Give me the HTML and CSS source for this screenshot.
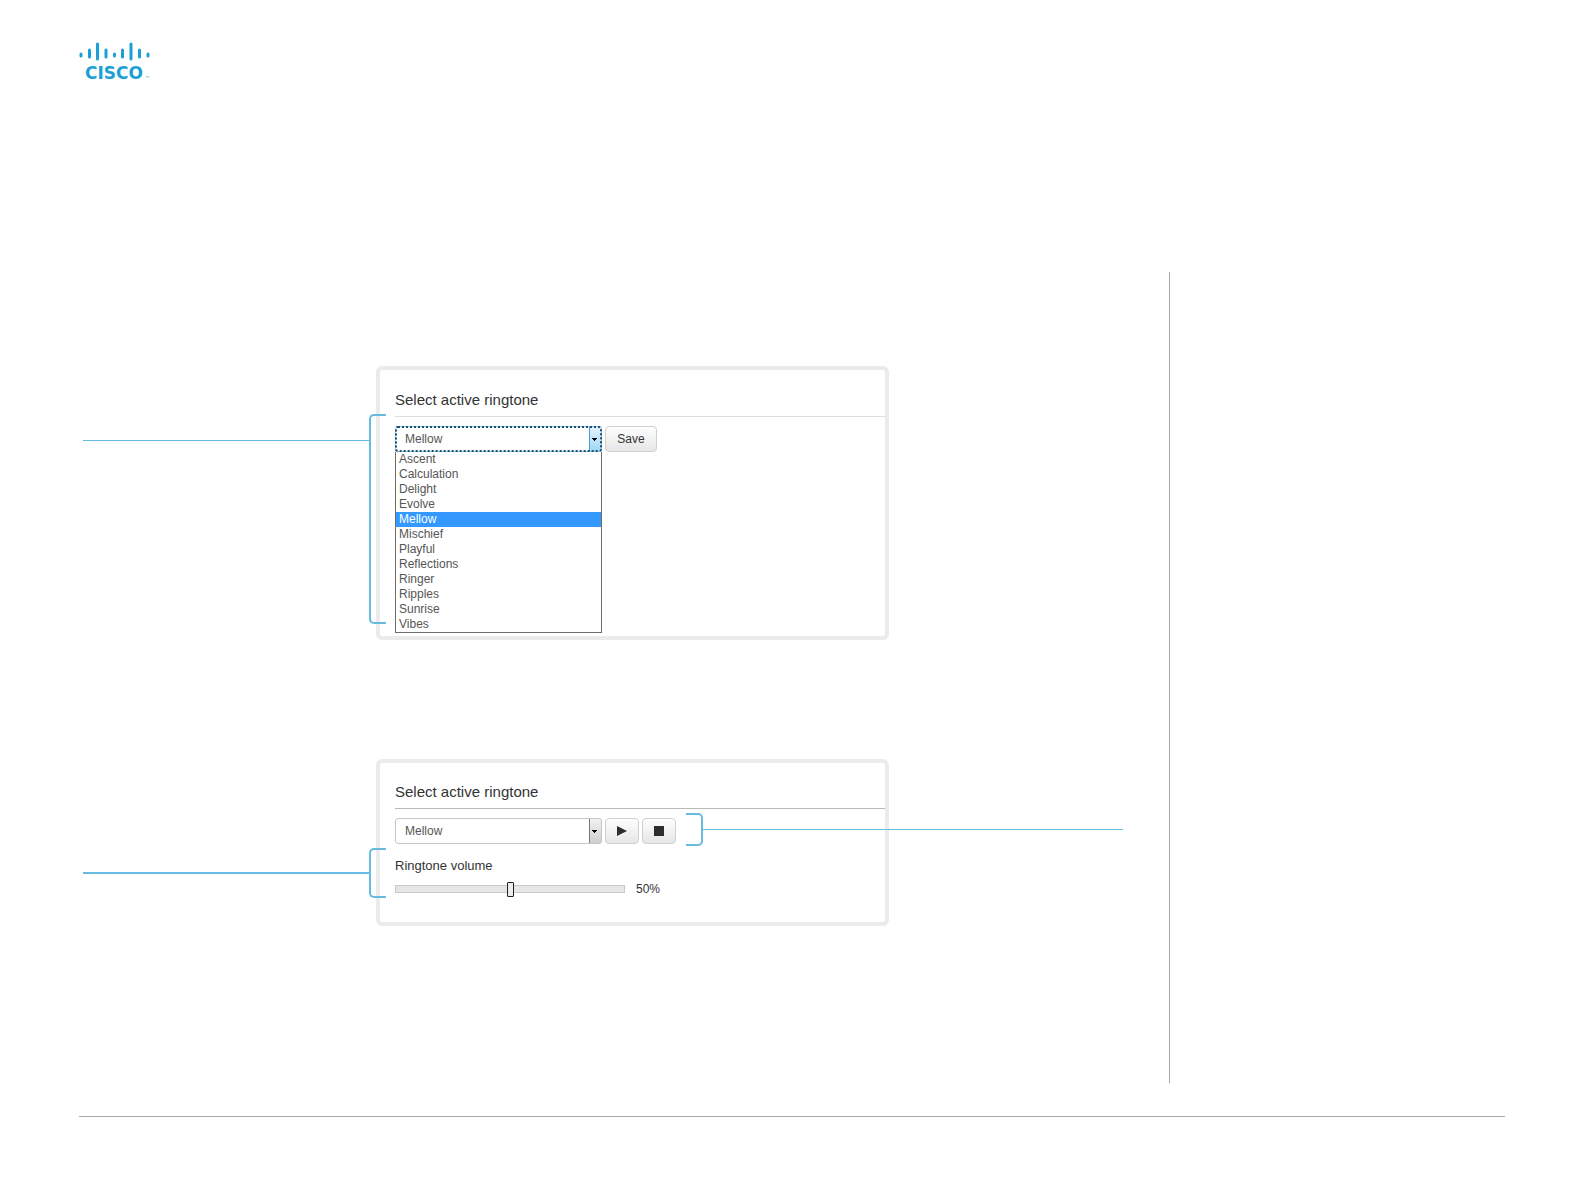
FILE: index.html
```html
<!DOCTYPE html>
<html lang="en">
<head>
<meta charset="utf-8">
<title>Select active ringtone</title>
<link rel="stylesheet" href="styles.css">
</head>
<body>
<div class="page">
  <header class="header">
    <svg class="logo" width="72" height="40" viewBox="0 0 72 40" role="img" aria-label="Cisco">
      <g stroke="#1b9fd4" stroke-width="3" stroke-linecap="round">
        <path d="M2 12v2M10.500 8v7M18.500 2v15M27 8v7M35.500 12v2M43.500 8v7M52 2v15M60.500 8v7M69 12v2"/>
      </g>
      <text class="logo-name" x="6" y="37">CISCO</text>
      <text class="logo-mark" x="66" y="38">™</text>
    </svg>
  </header>

  <main class="main">
    <div class="figures">
      <section class="figure">
        <div class="callout callout-left callout-list">
          <span class="leader"></span><span class="bracket"></span>
        </div>
        <div class="card">
          <h2 class="title title-light">Select active ringtone</h2>
          <div class="controls">
            <select class="picker picker-open" aria-label="Ringtone">
              <option>Mellow</option>
            </select>
            <button class="button button-save" type="button">Save</button>
          </div>
          <select class="options" size="12" aria-label="Available ringtones">
            <option>Ascent</option>
            <option>Calculation</option>
            <option>Delight</option>
            <option>Evolve</option>
            <option selected>Mellow</option>
            <option>Mischief</option>
            <option>Playful</option>
            <option>Reflections</option>
            <option>Ringer</option>
            <option>Ripples</option>
            <option>Sunrise</option>
            <option>Vibes</option>
          </select>
        </div>
      </section>

      <section class="figure">
        <div class="callout callout-left callout-volume">
          <span class="leader leader-thick"></span><span class="bracket"></span>
        </div>
        <div class="card card-volume">
          <h2 class="title">Select active ringtone</h2>
          <div class="controls">
            <select class="picker" aria-label="Active ringtone">
              <option>Mellow</option>
            </select>
            <button class="button button-icon" type="button" aria-label="Play">
              <svg width="12" height="12" viewBox="0 0 12 12"><path d="M1 1l10 5-10 5z" fill="#2d2d2d"/></svg>
            </button>
            <button class="button button-icon" type="button" aria-label="Stop">
              <svg width="12" height="12" viewBox="0 0 12 12"><path d="M1 1h10v10H1z" fill="#2d2d2d"/></svg>
            </button>
          </div>
          <label class="volume-label" for="volume">Ringtone volume</label>
          <div class="volume">
            <input class="slider" id="volume" type="range" min="0" max="100" value="50">
            <output class="volume-value" for="volume">50%</output>
          </div>
        </div>
        <div class="callout callout-right">
          <span class="bracket bracket-right"></span><span class="leader"></span>
        </div>
      </section>
    </div>
    <aside class="aside"></aside>
  </main>

  <footer class="footer"></footer>
</div>
</body>
</html>
```
FILE: styles.css
```css
* {
  box-sizing: border-box;
}

body {
  margin: 0;
  background: #fff;
  color: #333;
  font-family: "Liberation Sans", Arial, sans-serif;
  font-size: 12px;
}

.page {
  padding: 42px 79px 74px;
}

.header {
  margin-bottom: 190px;
}

.logo {
  display: block;
}

.logo-name,
.logo-mark {
  fill: #1b9fd4;
  font-family: "DejaVu Sans", sans-serif;
  font-size: 17px;
  font-weight: 700;
}

.logo-mark {
  font-size: 5px;
  font-weight: 400;
}

.main {
  display: grid;
  grid-template-columns: minmax(0, 1fr) 336px;
}

.aside {
  border-left: 1px solid #a9a9ab;
}

.figures {
  display: grid;
  gap: 119px;
  padding: 94px 0 157px;
}

.figure {
  display: grid;
  grid-template-columns: 297fr 513px 280fr;
  align-items: start;
}

.card {
  padding: 21px 0 3px 15px;
  border: 4px solid #ebebeb;
  border-radius: 6px;
}

.card-volume {
  padding-top: 20px;
  padding-bottom: 25px;
}

.title {
  margin: 0 0 9px;
  padding-bottom: 8px;
  border-bottom: 1px solid #b9b9b9;
  font-size: 15px;
  font-weight: 400;
  line-height: 17px;
}

.title-light {
  border-color: #dedede;
}

.controls {
  display: flex;
  gap: 3px;
}

.picker {
  width: 207px;
  height: 26px;
  margin: 0;
  padding: 0 24px 0 9px;
  border: 1px solid #c6c6c6;
  border-radius: 3px;
  appearance: none;
  background:
    linear-gradient(#000, #000) right 4px top 11px / 5px 1px no-repeat,
    linear-gradient(#000, #000) right 5px top 12px / 3px 1px no-repeat,
    linear-gradient(#000, #000) right 6px top 13px / 1px 1px no-repeat,
    linear-gradient(90deg, #777 1px, transparent 1px) right 0 top 0 / 12px 100% no-repeat,
    linear-gradient(#f1f1f1, #cfcfcf) right 0 top 0 / 12px 100% no-repeat,
    #fff;
  color: #555;
  font: inherit;
}

.picker-open {
  border-color: #8cc4e6;
  outline: 2px dotted #1c4f70;
  outline-offset: -2px;
  background:
    linear-gradient(#000, #000) right 4px top 11px / 5px 1px no-repeat,
    linear-gradient(#000, #000) right 5px top 12px / 3px 1px no-repeat,
    linear-gradient(#000, #000) right 6px top 13px / 1px 1px no-repeat,
    linear-gradient(90deg, #4a9cc9 1px, transparent 1px) right 0 top 0 / 12px 100% no-repeat,
    linear-gradient(#e2f3fd, #a2d6f5) right 0 top 0 / 12px 100% no-repeat,
    #fff;
}

.options {
  display: block;
  width: 207px;
  height: 181px;
  margin: 0;
  padding: 0;
  overflow: hidden;
  border: 1px solid #6e6e6e;
  border-top: 0;
  border-radius: 0;
  background: #fff;
  color: #555;
  font: inherit;
}

.options option {
  height: 15px;
  min-height: 15px;
  padding: 0 3px;
  line-height: 15px;
}

.options option:checked {
  background: #39f linear-gradient(#39f, #39f);
  color: #fff;
  -webkit-text-fill-color: #fff;
}

.button {
  height: 26px;
  margin: 0;
  padding: 0;
  border: 1px solid #d0d0d0;
  border-radius: 4px;
  background: linear-gradient(#fefefe, #e6e6e6);
  color: #333;
  font: inherit;
}

.button-save {
  width: 52px;
}

.button-icon {
  display: grid;
  place-items: center;
  width: 34px;
}

.volume-label {
  display: block;
  margin-top: 14px;
  font-size: 13px;
  line-height: 15px;
}

.volume {
  display: flex;
  align-items: center;
  gap: 11px;
  margin-top: 8px;
}

.slider {
  width: 230px;
  height: 16px;
  margin: 0;
  appearance: none;
  background: transparent;
}

.slider::-webkit-slider-runnable-track {
  height: 8px;
  border: 1px solid #c8c8c8;
  background: #e6e6e6;
}

.slider::-webkit-slider-thumb {
  width: 7px;
  height: 15px;
  margin-top: -4px;
  appearance: none;
  border: 1px solid #222;
  border-radius: 1px;
  background: #ececec;
}

.volume-value {
  line-height: 16px;
}

.callout {
  display: flex;
  align-items: center;
  z-index: 1;
}

.callout-left {
  margin: 0 -10px 0 4px;
}

.callout-list {
  height: 210px;
  margin-top: 48px;
}

.callout-list .leader {
  align-self: start;
  margin-top: 26px;
}

.callout-volume {
  height: 50px;
  margin-top: 89px;
}

.callout-right {
  height: 33px;
  margin: 54px 46px 0 -203px;
}

.leader {
  flex: 1;
  height: 1px;
  background: #68bbe0;
}

.leader-thick {
  height: 2px;
}

.bracket {
  width: 17px;
  height: 100%;
  border: 2px solid #68bbe0;
  border-right: 0;
  border-radius: 5px 0 0 5px;
}

.bracket-right {
  border-right: 2px solid #68bbe0;
  border-left: 0;
  border-radius: 0 5px 5px 0;
}

.footer {
  margin-top: 33px;
  border-top: 1px solid #a9a9ab;
}
```
